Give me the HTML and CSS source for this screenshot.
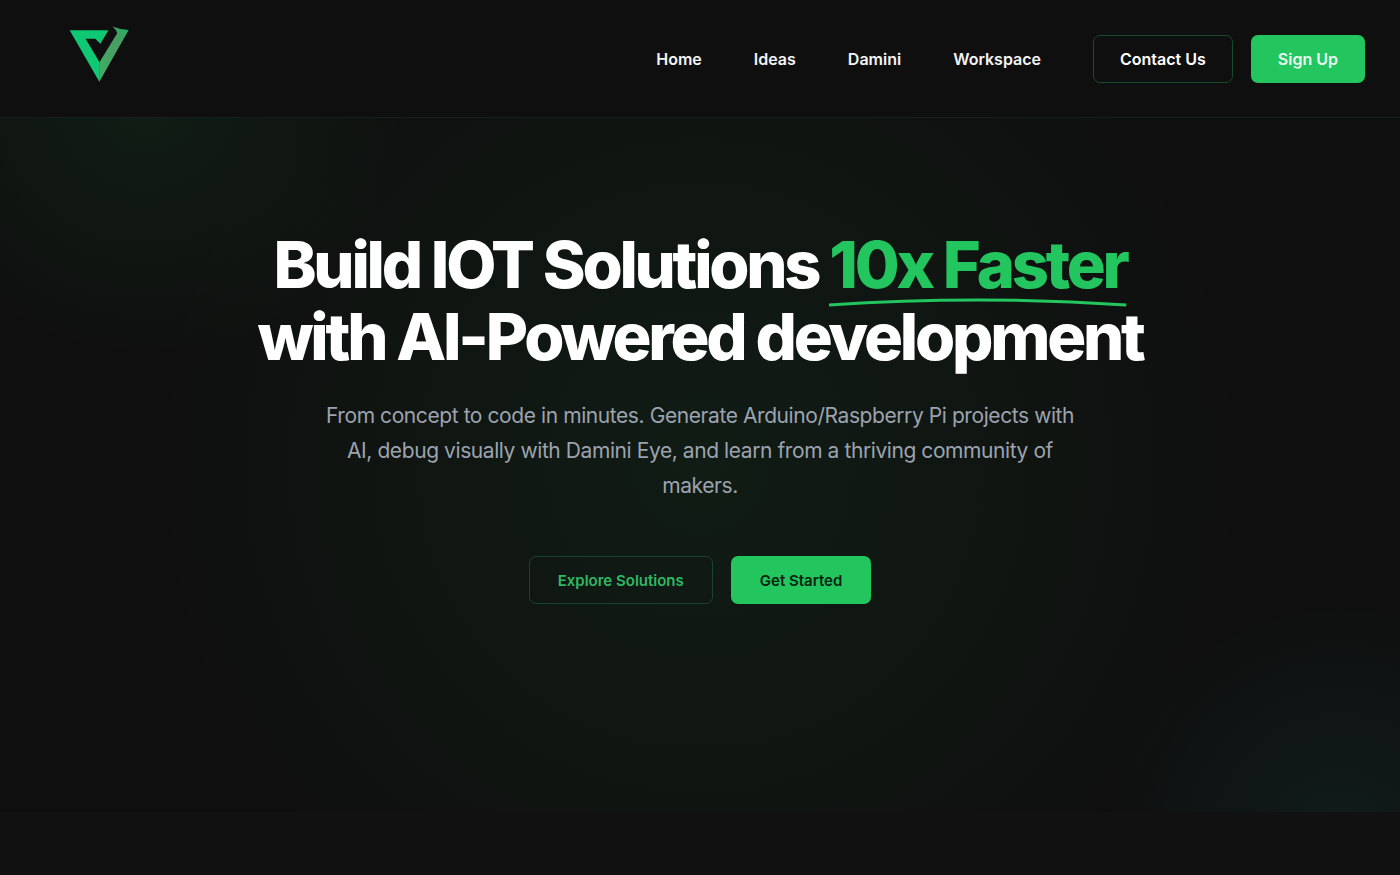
FILE: index.html
```html
<!DOCTYPE html>
<html lang="en">
<head>
    <meta charset="UTF-8">
    <meta name="viewport" content="width=device-width, initial-scale=1.0">
    <title>Build IOT Solutions 10x Faster</title>
    <link rel="stylesheet" href="styles.css">
</head>
<body>
    <header class="header">
        <a class="logo" href="#" aria-label="Home page">
            <svg viewBox="28 36 178 168" aria-hidden="true">
                <defs>
                    <linearGradient id="arm" x1="0" y1="1" x2="1" y2="0">
                        <stop offset="0" stop-color="#3fae63"/>
                        <stop offset="0.7" stop-color="#4a9d64"/>
                        <stop offset="1" stop-color="#17b862"/>
                    </linearGradient>
                </defs>
                <path fill="#0fc873" d="M30 48H145L121 88L106 73H77L119 144V201H118Z"/>
                <path fill="url(#arm)" d="M118 201V144L171 57Q169 47 157 37Q178 46 205 47Z"/>
            </svg>
        </a>
        <nav class="nav">
            <a class="nav-link" href="#">Home</a>
            <a class="nav-link" href="#">Ideas</a>
            <a class="nav-link" href="#">Damini</a>
            <a class="nav-link" href="#">Workspace</a>
            <div class="nav-buttons">
                <button class="btn btn-contact">Contact Us</button>
                <button class="btn btn-signup">Sign Up</button>
            </div>
        </nav>
    </header>

    <main class="hero">
        <h1 class="title">
            Build IOT Solutions
            <span class="highlight">10x Faster<svg class="underline" viewBox="0 0 300 12" preserveAspectRatio="none" aria-hidden="true"><path d="M0 9Q150 -1 300 9" fill="none" stroke="#22c55e" stroke-width="3"/></svg></span><br>
            with AI-Powered development
        </h1>
        <p class="subtitle">From concept to code in minutes. Generate Arduino/Raspberry Pi projects with AI, debug visually with Damini Eye, and learn from a thriving community of makers.</p>
        <div class="actions">
            <button class="btn btn-explore">Explore Solutions</button>
            <button class="btn btn-start">Get Started</button>
        </div>
    </main>
</body>
</html>
```

FILE: styles.css
```css
* {
    box-sizing: border-box;
}
body {
    margin: 0;
    background-color: #111111;
    color: #ffffff;
    font-family: Inter, sans-serif;
}
.header {
    display: flex;
    justify-content: space-between;
    align-items: center;
    padding: 26px 35px 26px 69px;
    background-color: #0f0f0f;
    border-bottom: 1px solid #13211a;
}
.logo svg {
    display: block;
    width: 60px;
    height: 57px;
}
.logo {
    padding-bottom: 8px;
}
.nav {
    display: flex;
    align-items: center;
    gap: 52px;
}
.nav-link {
    color: #f3f4f6;
    font-size: 16px;
    font-weight: 600;
    text-decoration: none;
}
.nav-buttons {
    display: flex;
    align-items: center;
    gap: 18px;
}
.btn {
    padding: 0 26px;
    height: 48px;
    border: 1px solid transparent;
    border-radius: 7px;
    font-family: inherit;
    font-size: 16px;
    font-weight: 600;
    cursor: pointer;
}
.btn-contact {
    background-color: transparent;
    border-color: #164a2a;
    color: #ffffff;
}
.btn-signup {
    background-color: #22c55e;
    color: #e8fbef;
}
.hero {
    display: flex;
    flex-direction: column;
    align-items: center;
    padding: 111px 24px 208px;
    text-align: center;
    background:
        radial-gradient(circle 260px at 145px -20px, rgba(34, 197, 94, 0.08), transparent),
        radial-gradient(circle 240px at calc(100% - 60px) calc(100% + 30px), rgba(20, 184, 166, 0.08), transparent),
        radial-gradient(circle 550px at 50% 50%, rgba(34, 197, 94, 0.07), transparent),
        #0f0f0f;
}
.title {
    margin: 0;
    font-size: 65px;
    font-weight: 800;
    line-height: 72px;
    letter-spacing: -0.05em;
}
.highlight {
    position: relative;
    display: inline-block;
    color: #22c55e;
}
.underline {
    position: absolute;
    left: 0;
    bottom: -7px;
    width: 100%;
    height: 12px;
}
.subtitle {
    max-width: 768px;
    margin: 25px 0 53px;
    color: #9ca3af;
    font-size: 21px;
    line-height: 35px;
    letter-spacing: -0.02em;
}
.actions {
    display: flex;
    gap: 18px;
}
.btn-explore,
.btn-start {
    padding: 0 28px;
    font-size: 15px;
}
.btn-explore {
    background-color: transparent;
    border-color: #1a4429;
    color: #2fb862;
}
.btn-start {
    background-color: #22c55e;
    color: #06240f;
}
```
